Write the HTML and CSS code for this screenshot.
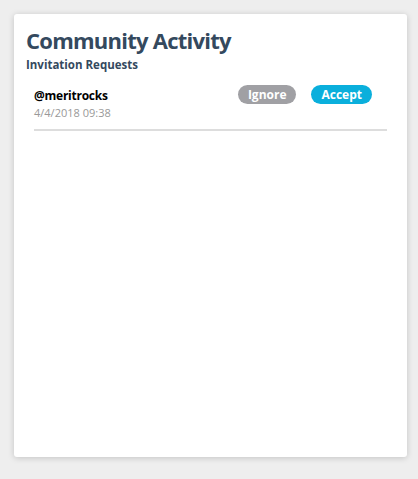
FILE: index.html
```html
<!DOCTYPE html>
<html lang="en">
<head>
  <meta charset="UTF-8" />
  <meta name="viewport" content="width=device-width, initial-scale=1.0" />
  <title>Community Activity</title>
  <link rel="stylesheet" href="styles.css">
</head>
<body>
  <div class="card">
    <h1>Community Activity</h1>
    <h2>Invitation Requests</h2>
    <div class="request-list">
      <div class="request">
        <div class="request-info">
          <div class="handle">@meritrocks</div>
          <div class="date">4/4/2018 09:38</div>
        </div>
        <div class="request-actions">
          <button class="btn btn-ignore">Ignore</button>
          <button class="btn btn-accept">Accept</button>
        </div>
      </div>
    </div>
  </div>
</body>
</html>
```

FILE: styles.css
```css
body {
  font-family: 'Open Sans', 'DejaVu Sans', sans-serif;
  background: #eeeeee;
  margin: 0;
  padding: 14px 11px 22px 14px;
}
.card {
  background: #ffffff;
  border-radius: 3px;
  box-shadow: 0 1px 6px rgba(0, 0, 0, 0.18);
  height: 443px;
  box-sizing: border-box;
  padding: 12px 20px 0 12px;
}
h1 {
  margin: 0;
  font-size: 22px;
  line-height: 28px;
  font-weight: 700;
  color: #34495e;
  letter-spacing: -0.75px;
}
h2 {
  margin: 3px 0 0;
  font-size: 11.5px;
  line-height: 15px;
  font-weight: 700;
  color: #34495e;
}
.request-list {
  padding: 0 0 0 8px;
  margin-top: 13px;
}
.request {
  display: flex;
  justify-content: space-between;
  align-items: flex-start;
  padding-bottom: 8px;
  border-bottom: 2px solid #dddddd;
}
.handle {
  margin-top: 3px;
  font-size: 12px;
  line-height: 16px;
  font-weight: 700;
  color: #000000;
  letter-spacing: -0.25px;
}
.date {
  margin-top: 1px;
  font-size: 11px;
  line-height: 16px;
  color: #999999;
}
.request-actions {
  display: flex;
  gap: 15px;
  padding-right: 15px;
}
.btn {
  border: none;
  border-radius: 10px;
  height: 19px;
  padding: 0 10px;
  font-family: inherit;
  font-size: 12px;
  font-weight: 700;
  color: #ffffff;
  cursor: pointer;
}
.btn-ignore {
  background: #a0a0a4;
}
.btn-accept {
  background: #0aafdc;
}
```
